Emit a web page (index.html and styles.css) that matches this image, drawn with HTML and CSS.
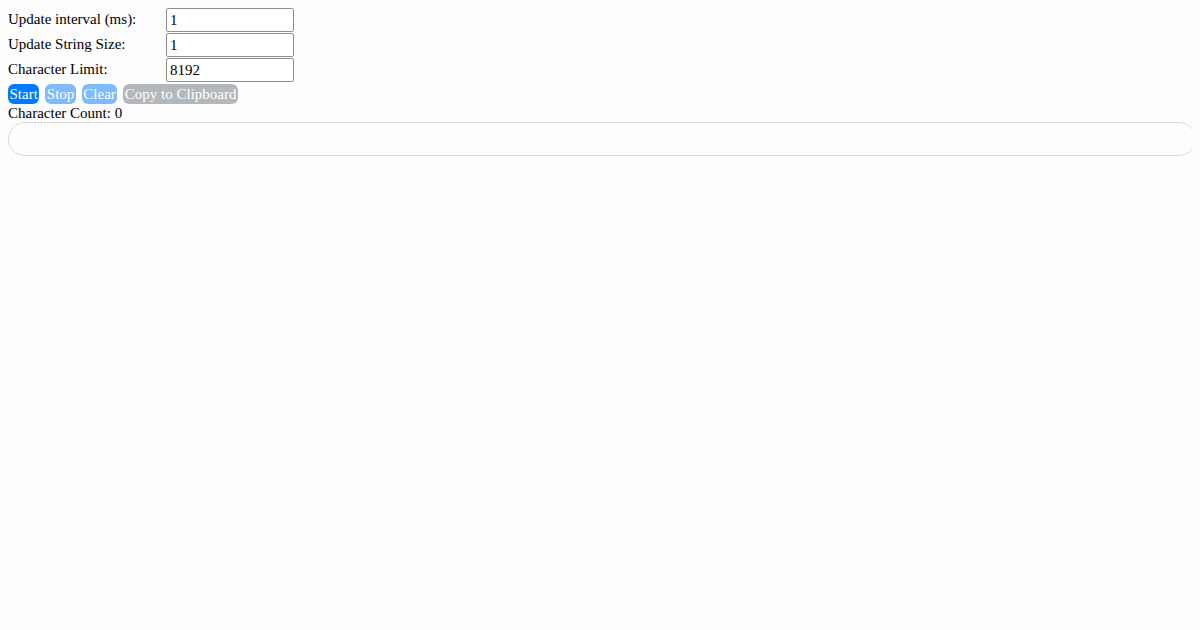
FILE: index.html
```html
<!DOCTYPE html>
<html>
<head>
<meta charset="utf-8">
<link rel="stylesheet" href="styles.css">
</head>
<body>
<div class="settings">
  <label class="lbl" for="interval">Update interval (ms):</label>
  <input class="field" id="interval" type="text" value="1">
  <label class="lbl" for="size">Update String Size:</label>
  <input class="field" id="size" type="text" value="1">
  <label class="lbl" for="limit">Character Limit:</label>
  <input class="field" id="limit" type="text" value="8192">
</div>
<div class="buttons">
  <button class="btn btn-primary">Start</button>
  <button class="btn btn-primary is-disabled">Stop</button>
  <button class="btn btn-primary is-disabled">Clear</button>
  <button class="btn btn-secondary is-disabled">Copy to Clipboard</button>
</div>
<div class="count">Character Count: 0</div>
<div class="output"></div>
</body>
</html>
```
FILE: styles.css
```css
html, body {
  background: #fdfdfd;
}
body {
  margin: 8px;
  font-family: "Liberation Serif", "Times New Roman", serif;
  font-size: 15px;
  color: #000;
}
.settings {
  display: grid;
  grid-template-columns: 158px 128px;
  row-gap: 1px;
  align-items: center;
}
.lbl {
  line-height: 18px;
  margin-top: -2px;
}
.field {
  box-sizing: border-box;
  width: 128px;
  height: 24px;
  margin: 0;
  padding: 1px 3px;
  border: 1px solid #8f8f8f;
  border-radius: 2px;
  background: #fff;
  font-family: "Liberation Serif", "Times New Roman", serif;
  font-size: 15px;
  color: #000;
}
.buttons {
  display: flex;
  gap: 6px;
  margin-top: 2px;
}
.btn {
  border: none;
  border-radius: 6px;
  padding: 1px 1.5px;
  height: 20px;
  font-family: "Liberation Serif", "Times New Roman", serif;
  font-size: 15px;
  line-height: 18px;
  color: #fff;
}
.btn-primary {
  background: #007bff;
}
.btn-secondary {
  background: #6c757d;
}
.is-disabled {
  opacity: 0.5;
}
.count {
  line-height: 17px;
  margin-top: 1px;
}
.output {
  box-sizing: border-box;
  width: calc(100% + 4px);
  height: 34px;
  border: 1px solid #d9d9d9;
  border-radius: 17px;
  background: #fdfdfd;
}
```
